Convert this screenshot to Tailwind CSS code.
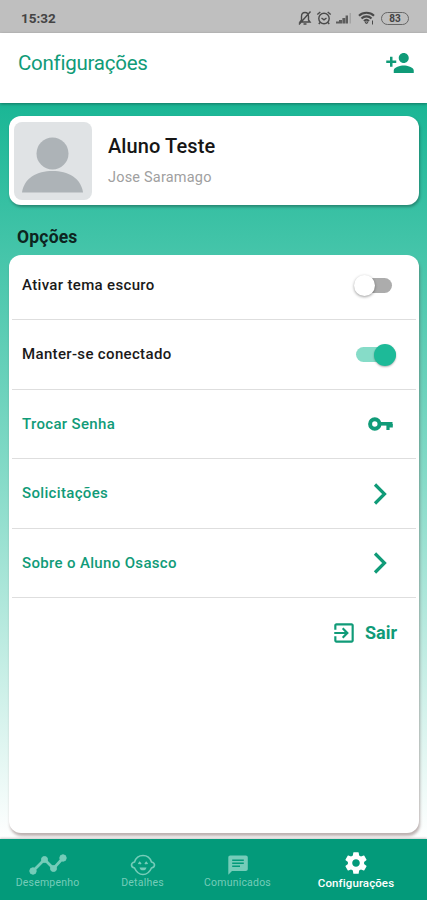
<!DOCTYPE html>
<html lang="pt-BR">
<head>
    <meta charset="UTF-8">
    <meta name="viewport" content="width=device-width, initial-scale=1.0">
    <title>Configurações</title>
    <script src="https://cdn.jsdelivr.net/npm/@tailwindcss/browser@4"></script>
</head>
<body class="bg-white font-['Roboto',sans-serif]">
    <div class="flex flex-col w-[427px] h-[900px] overflow-hidden">
        <!-- Barra de status -->
        <div class="flex items-center justify-between h-[33px] pt-[3px] pl-[21px] pr-[18px] bg-[#bfbfbf] text-[#444]">
            <span class="text-[13.5px] font-bold">15:32</span>
            <div class="flex items-center">
                <svg class="w-[14px] h-[16px]" viewBox="0 0 14 16" fill="none" stroke="#4a4a4a" stroke-width="1.400">
                    <path d="M2 12h10l-1.500-2V6.500C10.500 4 9 2.500 7 2.500S3.500 4 3.500 6.500V10L2 12zM5.500 14h3M1 14.500L12.500 1.500"/>
                </svg>
                <svg class="w-[16px] h-[16px] ml-[4px]" viewBox="0 0 16 16" fill="none" stroke="#4a4a4a" stroke-width="1.400">
                    <circle cx="8" cy="8.500" r="5.200"/>
                    <path d="M5.500 8L8 9.800L10.500 8M1.300 4.500L4.300 2M14.700 4.500L11.700 2M4 12.500l-1.200 1.500M12 12.500l1.200 1.500"/>
                </svg>
                <svg class="w-[16px] h-[12px] ml-[4px]" viewBox="0 0 16 12">
                    <path d="M0 11.500V9.500H3V11.500zM3 11.500V8H6V11.500zM6.400 11.500V6H9.200V11.500zM9.600 11.500V3.500H12V11.500z" fill="#5c5c5c"/>
                    <path d="M13.500 1H15V11.500H13.500z" fill="#a3a3a3"/>
                </svg>
                <svg class="w-[17px] h-[14px] ml-[6px]" viewBox="0 0 17 14" fill="none" stroke="#4a4a4a" stroke-width="2.100">
                    <path d="M1 4.800C5 .800 12 .800 16 4.800M3.500 7.400C6.300 4.700 10.700 4.700 13.500 7.400M6 10C7.500 8.500 9.500 8.500 11 10"/>
                    <path d="M7 11h3l-1.500 2zM14.500 9.500v4" stroke-width="1"/>
                </svg>
                <span class="flex items-center justify-center w-[28px] h-[13px] ml-[6px] rounded-full border-[1.5px] border-[#666] text-[10px] font-bold">83</span>
            </div>
        </div>

        <!-- Cabeçalho -->
        <header class="relative z-10 flex items-center justify-between h-[70px] pb-[10px] pl-[18px] pr-[12px] bg-white text-[#109b78] shadow-[0_1px_3px_rgba(0,0,0,0.35)]">
            <h1 class="text-[20.5px] tracking-[-0.25px]">Configurações</h1>
            <svg class="w-[30px] h-[30px]" viewBox="0 0 24 24" fill="#109b78">
                <path d="M15 12c2.210 0 4-1.790 4-4s-1.790-4-4-4-4 1.790-4 4 1.790 4 4 4zm-9-2V7H4v3H1v2h3v3h2v-3h3v-2H6zm9 4c-2.670 0-8 1.340-8 4v2h16v-2c0-2.660-5.330-4-8-4z"/>
            </svg>
        </header>

        <main class="h-[736px] px-[9px] pt-[13px] bg-linear-to-b/srgb from-[#1ab695] via-[#83dac7] via-50% to-white">
            <!-- Perfil -->
            <section class="flex items-center h-[89px] w-[410px] pl-[5px] bg-white rounded-[12px] shadow-[1px_2px_3px_rgba(0,0,0,0.3)]">
                <svg class="w-[78px] h-[78px] rounded-[8px] bg-[#e0e3e5]" viewBox="0 0 78 78" fill="#adb3b7">
                    <circle cx="38.500" cy="31.500" r="16"/>
                    <path d="M8 70.500C10 56 23 49 38.500 49S67 56 69 70.500z"/>
                </svg>
                <div class="ml-4">
                    <p class="text-[20px] leading-[24px] font-medium tracking-[0.1px] text-[#161616]">Aluno Teste</p>
                    <p class="mt-[11px] text-[14.5px] leading-[18px] text-[#a0a0a0] tracking-[0.2px]">Jose Saramago</p>
                </div>
            </section>

            <h2 class="h-[50px] pl-[8px] pt-[20px] text-[17.5px] leading-[24px] font-bold tracking-[0.2px] text-[#0d2420]">Opções</h2>

            <!-- Opções -->
            <section class="h-[578px] w-[410px] bg-white rounded-[12px] shadow-[1px_3px_3px_rgba(90,60,60,0.4)] text-[15px] font-medium tracking-[0.34px] text-[#1a1a1a]">
                <div class="flex items-center justify-between h-[65px] mx-[3px] pb-[4px] pl-[10px] pr-[24px] border-b border-[#dedede]">
                    <span>Ativar tema escuro</span>
                    <span class="relative w-[35px] h-[15px] rounded-full bg-[#acacac]">
                        <span class="absolute -left-[3px] -top-[3px] size-[21px] rounded-full bg-white shadow-[0_1px_3px_rgba(0,0,0,0.4)]"></span>
                    </span>
                </div>
                <div class="flex items-center justify-between h-[70px] mx-[3px] pl-[10px] pr-[20px] border-b border-[#dedede]">
                    <span>Manter-se conectado</span>
                    <span class="relative w-[40px] h-[15px] rounded-full bg-[#86dcc8]">
                        <span class="absolute right-0 -top-[3px] size-[22px] rounded-full bg-[#1dba98] shadow-[0_1px_2px_rgba(0,0,0,0.3)]"></span>
                    </span>
                </div>
                <div class="flex items-center justify-between h-[69px] mx-[3px] pl-[10px] pr-[23px] border-b border-[#dedede] text-[#109b78]">
                    <span>Trocar Senha</span>
                    <svg class="w-[25px] h-[16px]" viewBox="0 0 25 16" fill="none" stroke="#109b78">
                        <circle cx="6.800" cy="8" r="4.700" stroke-width="4"/>
                        <path d="M11 7.800H24.500" stroke-width="3.600"/>
                        <path d="M20 8V14M23.200 8V11.500" stroke-width="3.200"/>
                    </svg>
                </div>
                <div class="flex items-center justify-between h-[70px] mx-[3px] pl-[10px] pr-[29px] border-b border-[#dedede] text-[#109b78]">
                    <span>Solicitações</span>
                    <svg class="w-[14px] h-[22px]" viewBox="0 0 14 22" fill="none" stroke="#109b78" stroke-width="3.200">
                        <path d="M2 1.500l9.500 9.500l-9.500 9.500"/>
                    </svg>
                </div>
                <div class="flex items-center justify-between h-[69px] mx-[3px] pl-[10px] pr-[29px] border-b border-[#dedede] text-[#109b78]">
                    <span>Sobre o Aluno Osasco</span>
                    <svg class="w-[14px] h-[22px]" viewBox="0 0 14 22" fill="none" stroke="#109b78" stroke-width="3.200">
                        <path d="M2 1.500l9.500 9.500l-9.500 9.500"/>
                    </svg>
                </div>
                <div class="flex items-center justify-end h-[69px] pr-[22px] text-[#109b78]">
                    <svg class="w-[26px] h-[26px]" viewBox="0 0 24 24" fill="#109b78">
                        <path d="M10.090 15.590L11.500 17l5-5-5-5-1.410 1.410L12.670 11H3v2h9.670l-2.580 2.590zM19 3H5c-1.110 0-2 .900-2 2v4h2V5h14v14H5v-4H3v4c0 1.100.890 2 2 2h14c1.100 0 2-.900 2-2V5c0-1.100-.900-2-2-2z"/>
                    </svg>
                    <span class="ml-[8px] text-[18px] font-bold tracking-normal">Sair</span>
                </div>
            </section>
        </main>

        <!-- Navegação inferior -->
        <nav class="relative flex h-[61px] bg-[#039a7a] text-[10.5px] leading-[13px] text-[#75ccb9] shadow-[0_-1px_2px_rgba(0,0,0,0.2)]">
            <a class="flex flex-col items-center w-[95px] pt-[14px]">
                <svg class="w-[38px] h-[23px]" viewBox="0 0 38 23" fill="#75ccb9" stroke="#75ccb9">
                    <path d="M4 18L15.500 6.500L24.500 15.500L34 5" fill="none" stroke-width="2.800"/>
                    <circle cx="4" cy="18" r="3.200"/>
                    <circle cx="15.500" cy="6.500" r="3"/>
                    <circle cx="24.500" cy="15.500" r="3"/>
                    <circle cx="34" cy="5" r="3.200"/>
                </svg>
                <span class="tracking-[0.2px]">Desempenho</span>
            </a>
            <a class="flex flex-col items-center w-[95px] pt-[14px]">
                <svg class="w-[26px] h-[23px]" viewBox="0 0 26 23" fill="none" stroke="#75ccb9" stroke-width="1.600">
                    <path d="M4.500 9C6 4.500 9 2.500 13 2.500S20 4.500 21.500 9C23.500 9.500 24.500 10.500 24.500 12S23.500 14.500 21.500 15C19.500 19.500 17 21.500 13 21.500S6.500 19.500 4.500 15C2.500 14.500 1.500 13.500 1.500 12S2.500 9.500 4.500 9z"/>
                    <path d="M9.500 14.500h7C16 16.500 15 17.300 13 17.300S10 16.500 9.500 14.500z" fill="#75ccb9" stroke="none"/>
                    <path d="M8.500 11l1.200-1.500l1.300 1.500M15 11l1.200-1.500l1.300 1.500"/>
                </svg>
                <span class="tracking-[0.2px]">Detalhes</span>
            </a>
            <a class="flex flex-col items-center w-[95px] pt-[14px]">
                <svg class="w-[24px] h-[23px]" viewBox="0 0 24 23" fill="#75ccb9">
                    <path d="M4.300 2.500H19.700C21 2.500 21.800 3.300 21.800 4.500V16C21.800 17.200 21 18 19.700 18H6L2.300 21.700V4.500C2.300 3.300 3 2.500 4.300 2.500z"/>
                    <path d="M6.200 7.200H17.800M6.200 10.200H17.800M6.200 13.300H14" fill="none" stroke="#039a7a" stroke-width="1.500"/>
                </svg>
                <span class="tracking-[0.2px]">Comunicados</span>
            </a>
            <a class="flex flex-col items-center w-[142px] pt-[11px] text-white">
                <svg class="w-[26px] h-[26px]" viewBox="0 0 24 24" fill="#fff">
                    <path d="M19.430 12.980c.040-.320.070-.640.070-.980s-.030-.660-.070-.980l2.110-1.650c.190-.150.240-.420.120-.640l-2-3.460c-.120-.220-.390-.300-.610-.220l-2.490 1c-.520-.400-1.080-.730-1.690-.980l-.380-2.650C14.460 2.180 14.250 2 14 2h-4c-.250 0-.460.180-.490.420l-.380 2.650c-.610.250-1.170.590-1.690.980l-2.490-1c-.230-.090-.490 0-.610.220l-2 3.460c-.130.220-.070.490.120.640l2.110 1.650c-.040.320-.070.650-.070.980s.030.660.070.980l-2.110 1.650c-.190.150-.240.420-.120.640l2 3.460c.120.220.390.300.610.220l2.490-1c.520.400 1.080.730 1.690.980l.380 2.650c.030.240.240.420.490.420h4c.250 0 .460-.180.490-.420l.380-2.650c.610-.250 1.170-.590 1.690-.980l2.490 1c.230.090.490 0 .610-.220l2-3.460c.120-.220.070-.490-.120-.640l-2.110-1.650zM12 15.500c-1.930 0-3.500-1.570-3.500-3.500s1.570-3.500 3.500-3.500 3.500 1.570 3.500 3.500-1.570 3.500-3.500 3.500z"/>
                </svg>
                <span class="mt-px text-[11.5px] font-medium tracking-[0.1px]">Configurações</span>
            </a>
        </nav>
    </div>
</body>
</html>
